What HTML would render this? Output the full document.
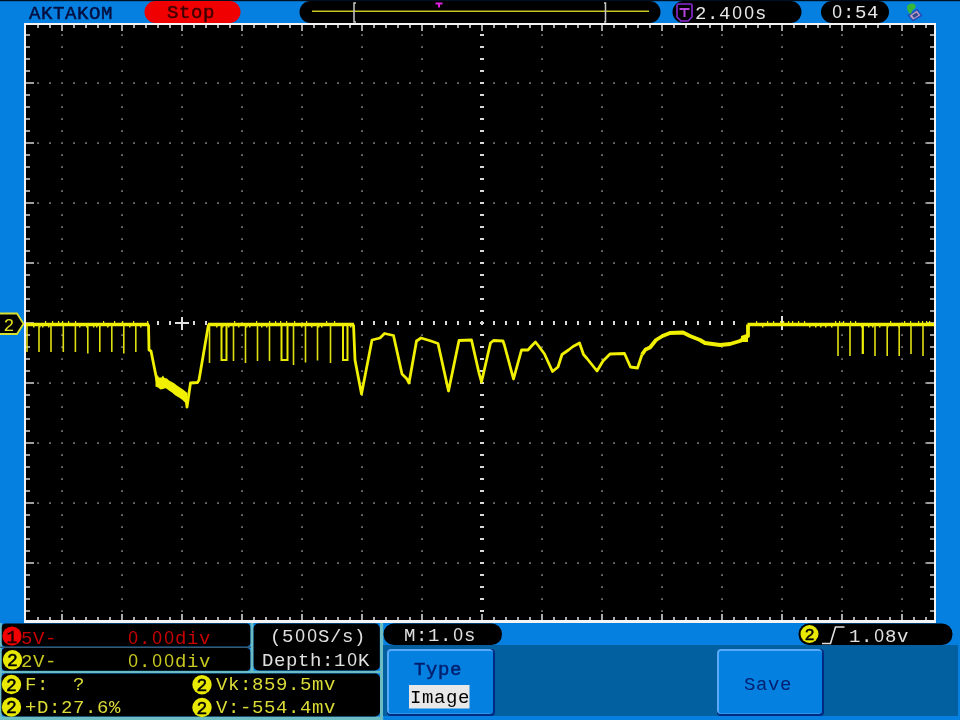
<!DOCTYPE html><html><head><meta charset="utf-8"><style>html,body{margin:0;padding:0;width:960px;height:720px;overflow:hidden;background:#0680e0}svg{display:block;will-change:transform}text{font-family:"Liberation Mono", monospace}.er{}.bd{stroke-width:0.5px}</style></head><body>
<svg width="960" height="720">
<rect x="0" y="0" width="960" height="720" fill="#0680e0"/>
<rect x="0" y="0" width="960" height="1.2" fill="#001020"/>
<rect x="24" y="23" width="912" height="600" fill="#f4f4f4"/>
<rect x="26" y="25" width="908" height="595" fill="#000"/>
<path fill="#d4d4d4" d="M37.2 25h1.6v3h-1.6zM37.2 620h1.6v-3h-1.6zM49.2 25h1.6v3h-1.6zM49.2 620h1.6v-3h-1.6zM61.2 25h1.6v6h-1.6zM61.2 620h1.6v-6h-1.6zM73.2 25h1.6v3h-1.6zM73.2 620h1.6v-3h-1.6zM85.2 25h1.6v3h-1.6zM85.2 620h1.6v-3h-1.6zM97.2 25h1.6v3h-1.6zM97.2 620h1.6v-3h-1.6zM109.2 25h1.6v3h-1.6zM109.2 620h1.6v-3h-1.6zM121.2 25h1.6v6h-1.6zM121.2 620h1.6v-6h-1.6zM133.2 25h1.6v3h-1.6zM133.2 620h1.6v-3h-1.6zM145.2 25h1.6v3h-1.6zM145.2 620h1.6v-3h-1.6zM157.2 25h1.6v3h-1.6zM157.2 620h1.6v-3h-1.6zM169.2 25h1.6v3h-1.6zM169.2 620h1.6v-3h-1.6zM181.2 25h1.6v6h-1.6zM181.2 620h1.6v-6h-1.6zM193.2 25h1.6v3h-1.6zM193.2 620h1.6v-3h-1.6zM205.2 25h1.6v3h-1.6zM205.2 620h1.6v-3h-1.6zM217.2 25h1.6v3h-1.6zM217.2 620h1.6v-3h-1.6zM229.2 25h1.6v3h-1.6zM229.2 620h1.6v-3h-1.6zM241.2 25h1.6v6h-1.6zM241.2 620h1.6v-6h-1.6zM253.2 25h1.6v3h-1.6zM253.2 620h1.6v-3h-1.6zM265.2 25h1.6v3h-1.6zM265.2 620h1.6v-3h-1.6zM277.2 25h1.6v3h-1.6zM277.2 620h1.6v-3h-1.6zM289.2 25h1.6v3h-1.6zM289.2 620h1.6v-3h-1.6zM301.2 25h1.6v6h-1.6zM301.2 620h1.6v-6h-1.6zM313.2 25h1.6v3h-1.6zM313.2 620h1.6v-3h-1.6zM325.2 25h1.6v3h-1.6zM325.2 620h1.6v-3h-1.6zM337.2 25h1.6v3h-1.6zM337.2 620h1.6v-3h-1.6zM349.2 25h1.6v3h-1.6zM349.2 620h1.6v-3h-1.6zM361.2 25h1.6v6h-1.6zM361.2 620h1.6v-6h-1.6zM373.2 25h1.6v3h-1.6zM373.2 620h1.6v-3h-1.6zM385.2 25h1.6v3h-1.6zM385.2 620h1.6v-3h-1.6zM397.2 25h1.6v3h-1.6zM397.2 620h1.6v-3h-1.6zM409.2 25h1.6v3h-1.6zM409.2 620h1.6v-3h-1.6zM421.2 25h1.6v6h-1.6zM421.2 620h1.6v-6h-1.6zM433.2 25h1.6v3h-1.6zM433.2 620h1.6v-3h-1.6zM445.2 25h1.6v3h-1.6zM445.2 620h1.6v-3h-1.6zM457.2 25h1.6v3h-1.6zM457.2 620h1.6v-3h-1.6zM469.2 25h1.6v3h-1.6zM469.2 620h1.6v-3h-1.6zM481.2 25h1.6v6h-1.6zM481.2 620h1.6v-6h-1.6zM493.2 25h1.6v3h-1.6zM493.2 620h1.6v-3h-1.6zM505.2 25h1.6v3h-1.6zM505.2 620h1.6v-3h-1.6zM517.2 25h1.6v3h-1.6zM517.2 620h1.6v-3h-1.6zM529.2 25h1.6v3h-1.6zM529.2 620h1.6v-3h-1.6zM541.2 25h1.6v6h-1.6zM541.2 620h1.6v-6h-1.6zM553.2 25h1.6v3h-1.6zM553.2 620h1.6v-3h-1.6zM565.2 25h1.6v3h-1.6zM565.2 620h1.6v-3h-1.6zM577.2 25h1.6v3h-1.6zM577.2 620h1.6v-3h-1.6zM589.2 25h1.6v3h-1.6zM589.2 620h1.6v-3h-1.6zM601.2 25h1.6v6h-1.6zM601.2 620h1.6v-6h-1.6zM613.2 25h1.6v3h-1.6zM613.2 620h1.6v-3h-1.6zM625.2 25h1.6v3h-1.6zM625.2 620h1.6v-3h-1.6zM637.2 25h1.6v3h-1.6zM637.2 620h1.6v-3h-1.6zM649.2 25h1.6v3h-1.6zM649.2 620h1.6v-3h-1.6zM661.2 25h1.6v6h-1.6zM661.2 620h1.6v-6h-1.6zM673.2 25h1.6v3h-1.6zM673.2 620h1.6v-3h-1.6zM685.2 25h1.6v3h-1.6zM685.2 620h1.6v-3h-1.6zM697.2 25h1.6v3h-1.6zM697.2 620h1.6v-3h-1.6zM709.2 25h1.6v3h-1.6zM709.2 620h1.6v-3h-1.6zM721.2 25h1.6v6h-1.6zM721.2 620h1.6v-6h-1.6zM733.2 25h1.6v3h-1.6zM733.2 620h1.6v-3h-1.6zM745.2 25h1.6v3h-1.6zM745.2 620h1.6v-3h-1.6zM757.2 25h1.6v3h-1.6zM757.2 620h1.6v-3h-1.6zM769.2 25h1.6v3h-1.6zM769.2 620h1.6v-3h-1.6zM781.2 25h1.6v6h-1.6zM781.2 620h1.6v-6h-1.6zM793.2 25h1.6v3h-1.6zM793.2 620h1.6v-3h-1.6zM805.2 25h1.6v3h-1.6zM805.2 620h1.6v-3h-1.6zM817.2 25h1.6v3h-1.6zM817.2 620h1.6v-3h-1.6zM829.2 25h1.6v3h-1.6zM829.2 620h1.6v-3h-1.6zM841.2 25h1.6v6h-1.6zM841.2 620h1.6v-6h-1.6zM853.2 25h1.6v3h-1.6zM853.2 620h1.6v-3h-1.6zM865.2 25h1.6v3h-1.6zM865.2 620h1.6v-3h-1.6zM877.2 25h1.6v3h-1.6zM877.2 620h1.6v-3h-1.6zM889.2 25h1.6v3h-1.6zM889.2 620h1.6v-3h-1.6zM901.2 25h1.6v6h-1.6zM901.2 620h1.6v-6h-1.6zM913.2 25h1.6v3h-1.6zM913.2 620h1.6v-3h-1.6zM925.2 25h1.6v3h-1.6zM925.2 620h1.6v-3h-1.6zM26 34.2h4v1.6h-4zM934 34.2h-4v1.6h4zM26 46.2h4v1.6h-4zM934 46.2h-4v1.6h4zM26 58.2h4v1.6h-4zM934 58.2h-4v1.6h4zM26 70.2h4v1.6h-4zM934 70.2h-4v1.6h4zM26 82.2h8v1.6h-8zM934 82.2h-8v1.6h8zM26 94.2h4v1.6h-4zM934 94.2h-4v1.6h4zM26 106.2h4v1.6h-4zM934 106.2h-4v1.6h4zM26 118.2h4v1.6h-4zM934 118.2h-4v1.6h4zM26 130.2h4v1.6h-4zM934 130.2h-4v1.6h4zM26 142.2h8v1.6h-8zM934 142.2h-8v1.6h8zM26 154.2h4v1.6h-4zM934 154.2h-4v1.6h4zM26 166.2h4v1.6h-4zM934 166.2h-4v1.6h4zM26 178.2h4v1.6h-4zM934 178.2h-4v1.6h4zM26 190.2h4v1.6h-4zM934 190.2h-4v1.6h4zM26 202.2h8v1.6h-8zM934 202.2h-8v1.6h8zM26 214.2h4v1.6h-4zM934 214.2h-4v1.6h4zM26 226.2h4v1.6h-4zM934 226.2h-4v1.6h4zM26 238.2h4v1.6h-4zM934 238.2h-4v1.6h4zM26 250.2h4v1.6h-4zM934 250.2h-4v1.6h4zM26 262.2h8v1.6h-8zM934 262.2h-8v1.6h8zM26 274.2h4v1.6h-4zM934 274.2h-4v1.6h4zM26 286.2h4v1.6h-4zM934 286.2h-4v1.6h4zM26 298.2h4v1.6h-4zM934 298.2h-4v1.6h4zM26 310.2h4v1.6h-4zM934 310.2h-4v1.6h4zM26 322.2h8v1.6h-8zM934 322.2h-8v1.6h8zM26 334.2h4v1.6h-4zM934 334.2h-4v1.6h4zM26 346.2h4v1.6h-4zM934 346.2h-4v1.6h4zM26 358.2h4v1.6h-4zM934 358.2h-4v1.6h4zM26 370.2h4v1.6h-4zM934 370.2h-4v1.6h4zM26 382.2h8v1.6h-8zM934 382.2h-8v1.6h8zM26 394.2h4v1.6h-4zM934 394.2h-4v1.6h4zM26 406.2h4v1.6h-4zM934 406.2h-4v1.6h4zM26 418.2h4v1.6h-4zM934 418.2h-4v1.6h4zM26 430.2h4v1.6h-4zM934 430.2h-4v1.6h4zM26 442.2h8v1.6h-8zM934 442.2h-8v1.6h8zM26 454.2h4v1.6h-4zM934 454.2h-4v1.6h4zM26 466.2h4v1.6h-4zM934 466.2h-4v1.6h4zM26 478.2h4v1.6h-4zM934 478.2h-4v1.6h4zM26 490.2h4v1.6h-4zM934 490.2h-4v1.6h4zM26 502.2h8v1.6h-8zM934 502.2h-8v1.6h8zM26 514.2h4v1.6h-4zM934 514.2h-4v1.6h4zM26 526.2h4v1.6h-4zM934 526.2h-4v1.6h4zM26 538.2h4v1.6h-4zM934 538.2h-4v1.6h4zM26 550.2h4v1.6h-4zM934 550.2h-4v1.6h4zM26 562.2h8v1.6h-8zM934 562.2h-8v1.6h8zM26 574.2h4v1.6h-4zM934 574.2h-4v1.6h4zM26 586.2h4v1.6h-4zM934 586.2h-4v1.6h4zM26 598.2h4v1.6h-4zM934 598.2h-4v1.6h4zM26 610.2h4v1.6h-4zM934 610.2h-4v1.6h4z"/>
<path fill="#7c7c7c" d="M61.2 34.2h1.7v1.7h-1.7zM61.2 46.2h1.7v1.7h-1.7zM61.2 58.2h1.7v1.7h-1.7zM61.2 70.2h1.7v1.7h-1.7zM61.2 82.2h1.7v1.7h-1.7zM61.2 94.2h1.7v1.7h-1.7zM61.2 106.2h1.7v1.7h-1.7zM61.2 118.2h1.7v1.7h-1.7zM61.2 130.2h1.7v1.7h-1.7zM61.2 142.2h1.7v1.7h-1.7zM61.2 154.2h1.7v1.7h-1.7zM61.2 166.2h1.7v1.7h-1.7zM61.2 178.2h1.7v1.7h-1.7zM61.2 190.2h1.7v1.7h-1.7zM61.2 202.2h1.7v1.7h-1.7zM61.2 214.2h1.7v1.7h-1.7zM61.2 226.2h1.7v1.7h-1.7zM61.2 238.2h1.7v1.7h-1.7zM61.2 250.2h1.7v1.7h-1.7zM61.2 262.2h1.7v1.7h-1.7zM61.2 274.2h1.7v1.7h-1.7zM61.2 286.2h1.7v1.7h-1.7zM61.2 298.2h1.7v1.7h-1.7zM61.2 310.2h1.7v1.7h-1.7zM61.2 322.2h1.7v1.7h-1.7zM61.2 334.2h1.7v1.7h-1.7zM61.2 346.2h1.7v1.7h-1.7zM61.2 358.2h1.7v1.7h-1.7zM61.2 370.2h1.7v1.7h-1.7zM61.2 382.2h1.7v1.7h-1.7zM61.2 394.2h1.7v1.7h-1.7zM61.2 406.2h1.7v1.7h-1.7zM61.2 418.2h1.7v1.7h-1.7zM61.2 430.2h1.7v1.7h-1.7zM61.2 442.2h1.7v1.7h-1.7zM61.2 454.2h1.7v1.7h-1.7zM61.2 466.2h1.7v1.7h-1.7zM61.2 478.2h1.7v1.7h-1.7zM61.2 490.2h1.7v1.7h-1.7zM61.2 502.2h1.7v1.7h-1.7zM61.2 514.2h1.7v1.7h-1.7zM61.2 526.2h1.7v1.7h-1.7zM61.2 538.2h1.7v1.7h-1.7zM61.2 550.2h1.7v1.7h-1.7zM61.2 562.2h1.7v1.7h-1.7zM61.2 574.2h1.7v1.7h-1.7zM61.2 586.2h1.7v1.7h-1.7zM61.2 598.2h1.7v1.7h-1.7zM61.2 610.2h1.7v1.7h-1.7zM121.2 34.2h1.7v1.7h-1.7zM121.2 46.2h1.7v1.7h-1.7zM121.2 58.2h1.7v1.7h-1.7zM121.2 70.2h1.7v1.7h-1.7zM121.2 82.2h1.7v1.7h-1.7zM121.2 94.2h1.7v1.7h-1.7zM121.2 106.2h1.7v1.7h-1.7zM121.2 118.2h1.7v1.7h-1.7zM121.2 130.2h1.7v1.7h-1.7zM121.2 142.2h1.7v1.7h-1.7zM121.2 154.2h1.7v1.7h-1.7zM121.2 166.2h1.7v1.7h-1.7zM121.2 178.2h1.7v1.7h-1.7zM121.2 190.2h1.7v1.7h-1.7zM121.2 202.2h1.7v1.7h-1.7zM121.2 214.2h1.7v1.7h-1.7zM121.2 226.2h1.7v1.7h-1.7zM121.2 238.2h1.7v1.7h-1.7zM121.2 250.2h1.7v1.7h-1.7zM121.2 262.2h1.7v1.7h-1.7zM121.2 274.2h1.7v1.7h-1.7zM121.2 286.2h1.7v1.7h-1.7zM121.2 298.2h1.7v1.7h-1.7zM121.2 310.2h1.7v1.7h-1.7zM121.2 322.2h1.7v1.7h-1.7zM121.2 334.2h1.7v1.7h-1.7zM121.2 346.2h1.7v1.7h-1.7zM121.2 358.2h1.7v1.7h-1.7zM121.2 370.2h1.7v1.7h-1.7zM121.2 382.2h1.7v1.7h-1.7zM121.2 394.2h1.7v1.7h-1.7zM121.2 406.2h1.7v1.7h-1.7zM121.2 418.2h1.7v1.7h-1.7zM121.2 430.2h1.7v1.7h-1.7zM121.2 442.2h1.7v1.7h-1.7zM121.2 454.2h1.7v1.7h-1.7zM121.2 466.2h1.7v1.7h-1.7zM121.2 478.2h1.7v1.7h-1.7zM121.2 490.2h1.7v1.7h-1.7zM121.2 502.2h1.7v1.7h-1.7zM121.2 514.2h1.7v1.7h-1.7zM121.2 526.2h1.7v1.7h-1.7zM121.2 538.2h1.7v1.7h-1.7zM121.2 550.2h1.7v1.7h-1.7zM121.2 562.2h1.7v1.7h-1.7zM121.2 574.2h1.7v1.7h-1.7zM121.2 586.2h1.7v1.7h-1.7zM121.2 598.2h1.7v1.7h-1.7zM121.2 610.2h1.7v1.7h-1.7zM181.2 34.2h1.7v1.7h-1.7zM181.2 46.2h1.7v1.7h-1.7zM181.2 58.2h1.7v1.7h-1.7zM181.2 70.2h1.7v1.7h-1.7zM181.2 82.2h1.7v1.7h-1.7zM181.2 94.2h1.7v1.7h-1.7zM181.2 106.2h1.7v1.7h-1.7zM181.2 118.2h1.7v1.7h-1.7zM181.2 130.2h1.7v1.7h-1.7zM181.2 142.2h1.7v1.7h-1.7zM181.2 154.2h1.7v1.7h-1.7zM181.2 166.2h1.7v1.7h-1.7zM181.2 178.2h1.7v1.7h-1.7zM181.2 190.2h1.7v1.7h-1.7zM181.2 202.2h1.7v1.7h-1.7zM181.2 214.2h1.7v1.7h-1.7zM181.2 226.2h1.7v1.7h-1.7zM181.2 238.2h1.7v1.7h-1.7zM181.2 250.2h1.7v1.7h-1.7zM181.2 262.2h1.7v1.7h-1.7zM181.2 274.2h1.7v1.7h-1.7zM181.2 286.2h1.7v1.7h-1.7zM181.2 298.2h1.7v1.7h-1.7zM181.2 310.2h1.7v1.7h-1.7zM181.2 322.2h1.7v1.7h-1.7zM181.2 334.2h1.7v1.7h-1.7zM181.2 346.2h1.7v1.7h-1.7zM181.2 358.2h1.7v1.7h-1.7zM181.2 370.2h1.7v1.7h-1.7zM181.2 382.2h1.7v1.7h-1.7zM181.2 394.2h1.7v1.7h-1.7zM181.2 406.2h1.7v1.7h-1.7zM181.2 418.2h1.7v1.7h-1.7zM181.2 430.2h1.7v1.7h-1.7zM181.2 442.2h1.7v1.7h-1.7zM181.2 454.2h1.7v1.7h-1.7zM181.2 466.2h1.7v1.7h-1.7zM181.2 478.2h1.7v1.7h-1.7zM181.2 490.2h1.7v1.7h-1.7zM181.2 502.2h1.7v1.7h-1.7zM181.2 514.2h1.7v1.7h-1.7zM181.2 526.2h1.7v1.7h-1.7zM181.2 538.2h1.7v1.7h-1.7zM181.2 550.2h1.7v1.7h-1.7zM181.2 562.2h1.7v1.7h-1.7zM181.2 574.2h1.7v1.7h-1.7zM181.2 586.2h1.7v1.7h-1.7zM181.2 598.2h1.7v1.7h-1.7zM181.2 610.2h1.7v1.7h-1.7zM241.2 34.2h1.7v1.7h-1.7zM241.2 46.2h1.7v1.7h-1.7zM241.2 58.2h1.7v1.7h-1.7zM241.2 70.2h1.7v1.7h-1.7zM241.2 82.2h1.7v1.7h-1.7zM241.2 94.2h1.7v1.7h-1.7zM241.2 106.2h1.7v1.7h-1.7zM241.2 118.2h1.7v1.7h-1.7zM241.2 130.2h1.7v1.7h-1.7zM241.2 142.2h1.7v1.7h-1.7zM241.2 154.2h1.7v1.7h-1.7zM241.2 166.2h1.7v1.7h-1.7zM241.2 178.2h1.7v1.7h-1.7zM241.2 190.2h1.7v1.7h-1.7zM241.2 202.2h1.7v1.7h-1.7zM241.2 214.2h1.7v1.7h-1.7zM241.2 226.2h1.7v1.7h-1.7zM241.2 238.2h1.7v1.7h-1.7zM241.2 250.2h1.7v1.7h-1.7zM241.2 262.2h1.7v1.7h-1.7zM241.2 274.2h1.7v1.7h-1.7zM241.2 286.2h1.7v1.7h-1.7zM241.2 298.2h1.7v1.7h-1.7zM241.2 310.2h1.7v1.7h-1.7zM241.2 322.2h1.7v1.7h-1.7zM241.2 334.2h1.7v1.7h-1.7zM241.2 346.2h1.7v1.7h-1.7zM241.2 358.2h1.7v1.7h-1.7zM241.2 370.2h1.7v1.7h-1.7zM241.2 382.2h1.7v1.7h-1.7zM241.2 394.2h1.7v1.7h-1.7zM241.2 406.2h1.7v1.7h-1.7zM241.2 418.2h1.7v1.7h-1.7zM241.2 430.2h1.7v1.7h-1.7zM241.2 442.2h1.7v1.7h-1.7zM241.2 454.2h1.7v1.7h-1.7zM241.2 466.2h1.7v1.7h-1.7zM241.2 478.2h1.7v1.7h-1.7zM241.2 490.2h1.7v1.7h-1.7zM241.2 502.2h1.7v1.7h-1.7zM241.2 514.2h1.7v1.7h-1.7zM241.2 526.2h1.7v1.7h-1.7zM241.2 538.2h1.7v1.7h-1.7zM241.2 550.2h1.7v1.7h-1.7zM241.2 562.2h1.7v1.7h-1.7zM241.2 574.2h1.7v1.7h-1.7zM241.2 586.2h1.7v1.7h-1.7zM241.2 598.2h1.7v1.7h-1.7zM241.2 610.2h1.7v1.7h-1.7zM301.2 34.2h1.7v1.7h-1.7zM301.2 46.2h1.7v1.7h-1.7zM301.2 58.2h1.7v1.7h-1.7zM301.2 70.2h1.7v1.7h-1.7zM301.2 82.2h1.7v1.7h-1.7zM301.2 94.2h1.7v1.7h-1.7zM301.2 106.2h1.7v1.7h-1.7zM301.2 118.2h1.7v1.7h-1.7zM301.2 130.2h1.7v1.7h-1.7zM301.2 142.2h1.7v1.7h-1.7zM301.2 154.2h1.7v1.7h-1.7zM301.2 166.2h1.7v1.7h-1.7zM301.2 178.2h1.7v1.7h-1.7zM301.2 190.2h1.7v1.7h-1.7zM301.2 202.2h1.7v1.7h-1.7zM301.2 214.2h1.7v1.7h-1.7zM301.2 226.2h1.7v1.7h-1.7zM301.2 238.2h1.7v1.7h-1.7zM301.2 250.2h1.7v1.7h-1.7zM301.2 262.2h1.7v1.7h-1.7zM301.2 274.2h1.7v1.7h-1.7zM301.2 286.2h1.7v1.7h-1.7zM301.2 298.2h1.7v1.7h-1.7zM301.2 310.2h1.7v1.7h-1.7zM301.2 322.2h1.7v1.7h-1.7zM301.2 334.2h1.7v1.7h-1.7zM301.2 346.2h1.7v1.7h-1.7zM301.2 358.2h1.7v1.7h-1.7zM301.2 370.2h1.7v1.7h-1.7zM301.2 382.2h1.7v1.7h-1.7zM301.2 394.2h1.7v1.7h-1.7zM301.2 406.2h1.7v1.7h-1.7zM301.2 418.2h1.7v1.7h-1.7zM301.2 430.2h1.7v1.7h-1.7zM301.2 442.2h1.7v1.7h-1.7zM301.2 454.2h1.7v1.7h-1.7zM301.2 466.2h1.7v1.7h-1.7zM301.2 478.2h1.7v1.7h-1.7zM301.2 490.2h1.7v1.7h-1.7zM301.2 502.2h1.7v1.7h-1.7zM301.2 514.2h1.7v1.7h-1.7zM301.2 526.2h1.7v1.7h-1.7zM301.2 538.2h1.7v1.7h-1.7zM301.2 550.2h1.7v1.7h-1.7zM301.2 562.2h1.7v1.7h-1.7zM301.2 574.2h1.7v1.7h-1.7zM301.2 586.2h1.7v1.7h-1.7zM301.2 598.2h1.7v1.7h-1.7zM301.2 610.2h1.7v1.7h-1.7zM361.2 34.2h1.7v1.7h-1.7zM361.2 46.2h1.7v1.7h-1.7zM361.2 58.2h1.7v1.7h-1.7zM361.2 70.2h1.7v1.7h-1.7zM361.2 82.2h1.7v1.7h-1.7zM361.2 94.2h1.7v1.7h-1.7zM361.2 106.2h1.7v1.7h-1.7zM361.2 118.2h1.7v1.7h-1.7zM361.2 130.2h1.7v1.7h-1.7zM361.2 142.2h1.7v1.7h-1.7zM361.2 154.2h1.7v1.7h-1.7zM361.2 166.2h1.7v1.7h-1.7zM361.2 178.2h1.7v1.7h-1.7zM361.2 190.2h1.7v1.7h-1.7zM361.2 202.2h1.7v1.7h-1.7zM361.2 214.2h1.7v1.7h-1.7zM361.2 226.2h1.7v1.7h-1.7zM361.2 238.2h1.7v1.7h-1.7zM361.2 250.2h1.7v1.7h-1.7zM361.2 262.2h1.7v1.7h-1.7zM361.2 274.2h1.7v1.7h-1.7zM361.2 286.2h1.7v1.7h-1.7zM361.2 298.2h1.7v1.7h-1.7zM361.2 310.2h1.7v1.7h-1.7zM361.2 322.2h1.7v1.7h-1.7zM361.2 334.2h1.7v1.7h-1.7zM361.2 346.2h1.7v1.7h-1.7zM361.2 358.2h1.7v1.7h-1.7zM361.2 370.2h1.7v1.7h-1.7zM361.2 382.2h1.7v1.7h-1.7zM361.2 394.2h1.7v1.7h-1.7zM361.2 406.2h1.7v1.7h-1.7zM361.2 418.2h1.7v1.7h-1.7zM361.2 430.2h1.7v1.7h-1.7zM361.2 442.2h1.7v1.7h-1.7zM361.2 454.2h1.7v1.7h-1.7zM361.2 466.2h1.7v1.7h-1.7zM361.2 478.2h1.7v1.7h-1.7zM361.2 490.2h1.7v1.7h-1.7zM361.2 502.2h1.7v1.7h-1.7zM361.2 514.2h1.7v1.7h-1.7zM361.2 526.2h1.7v1.7h-1.7zM361.2 538.2h1.7v1.7h-1.7zM361.2 550.2h1.7v1.7h-1.7zM361.2 562.2h1.7v1.7h-1.7zM361.2 574.2h1.7v1.7h-1.7zM361.2 586.2h1.7v1.7h-1.7zM361.2 598.2h1.7v1.7h-1.7zM361.2 610.2h1.7v1.7h-1.7zM421.2 34.2h1.7v1.7h-1.7zM421.2 46.2h1.7v1.7h-1.7zM421.2 58.2h1.7v1.7h-1.7zM421.2 70.2h1.7v1.7h-1.7zM421.2 82.2h1.7v1.7h-1.7zM421.2 94.2h1.7v1.7h-1.7zM421.2 106.2h1.7v1.7h-1.7zM421.2 118.2h1.7v1.7h-1.7zM421.2 130.2h1.7v1.7h-1.7zM421.2 142.2h1.7v1.7h-1.7zM421.2 154.2h1.7v1.7h-1.7zM421.2 166.2h1.7v1.7h-1.7zM421.2 178.2h1.7v1.7h-1.7zM421.2 190.2h1.7v1.7h-1.7zM421.2 202.2h1.7v1.7h-1.7zM421.2 214.2h1.7v1.7h-1.7zM421.2 226.2h1.7v1.7h-1.7zM421.2 238.2h1.7v1.7h-1.7zM421.2 250.2h1.7v1.7h-1.7zM421.2 262.2h1.7v1.7h-1.7zM421.2 274.2h1.7v1.7h-1.7zM421.2 286.2h1.7v1.7h-1.7zM421.2 298.2h1.7v1.7h-1.7zM421.2 310.2h1.7v1.7h-1.7zM421.2 322.2h1.7v1.7h-1.7zM421.2 334.2h1.7v1.7h-1.7zM421.2 346.2h1.7v1.7h-1.7zM421.2 358.2h1.7v1.7h-1.7zM421.2 370.2h1.7v1.7h-1.7zM421.2 382.2h1.7v1.7h-1.7zM421.2 394.2h1.7v1.7h-1.7zM421.2 406.2h1.7v1.7h-1.7zM421.2 418.2h1.7v1.7h-1.7zM421.2 430.2h1.7v1.7h-1.7zM421.2 442.2h1.7v1.7h-1.7zM421.2 454.2h1.7v1.7h-1.7zM421.2 466.2h1.7v1.7h-1.7zM421.2 478.2h1.7v1.7h-1.7zM421.2 490.2h1.7v1.7h-1.7zM421.2 502.2h1.7v1.7h-1.7zM421.2 514.2h1.7v1.7h-1.7zM421.2 526.2h1.7v1.7h-1.7zM421.2 538.2h1.7v1.7h-1.7zM421.2 550.2h1.7v1.7h-1.7zM421.2 562.2h1.7v1.7h-1.7zM421.2 574.2h1.7v1.7h-1.7zM421.2 586.2h1.7v1.7h-1.7zM421.2 598.2h1.7v1.7h-1.7zM421.2 610.2h1.7v1.7h-1.7zM541.2 34.2h1.7v1.7h-1.7zM541.2 46.2h1.7v1.7h-1.7zM541.2 58.2h1.7v1.7h-1.7zM541.2 70.2h1.7v1.7h-1.7zM541.2 82.2h1.7v1.7h-1.7zM541.2 94.2h1.7v1.7h-1.7zM541.2 106.2h1.7v1.7h-1.7zM541.2 118.2h1.7v1.7h-1.7zM541.2 130.2h1.7v1.7h-1.7zM541.2 142.2h1.7v1.7h-1.7zM541.2 154.2h1.7v1.7h-1.7zM541.2 166.2h1.7v1.7h-1.7zM541.2 178.2h1.7v1.7h-1.7zM541.2 190.2h1.7v1.7h-1.7zM541.2 202.2h1.7v1.7h-1.7zM541.2 214.2h1.7v1.7h-1.7zM541.2 226.2h1.7v1.7h-1.7zM541.2 238.2h1.7v1.7h-1.7zM541.2 250.2h1.7v1.7h-1.7zM541.2 262.2h1.7v1.7h-1.7zM541.2 274.2h1.7v1.7h-1.7zM541.2 286.2h1.7v1.7h-1.7zM541.2 298.2h1.7v1.7h-1.7zM541.2 310.2h1.7v1.7h-1.7zM541.2 322.2h1.7v1.7h-1.7zM541.2 334.2h1.7v1.7h-1.7zM541.2 346.2h1.7v1.7h-1.7zM541.2 358.2h1.7v1.7h-1.7zM541.2 370.2h1.7v1.7h-1.7zM541.2 382.2h1.7v1.7h-1.7zM541.2 394.2h1.7v1.7h-1.7zM541.2 406.2h1.7v1.7h-1.7zM541.2 418.2h1.7v1.7h-1.7zM541.2 430.2h1.7v1.7h-1.7zM541.2 442.2h1.7v1.7h-1.7zM541.2 454.2h1.7v1.7h-1.7zM541.2 466.2h1.7v1.7h-1.7zM541.2 478.2h1.7v1.7h-1.7zM541.2 490.2h1.7v1.7h-1.7zM541.2 502.2h1.7v1.7h-1.7zM541.2 514.2h1.7v1.7h-1.7zM541.2 526.2h1.7v1.7h-1.7zM541.2 538.2h1.7v1.7h-1.7zM541.2 550.2h1.7v1.7h-1.7zM541.2 562.2h1.7v1.7h-1.7zM541.2 574.2h1.7v1.7h-1.7zM541.2 586.2h1.7v1.7h-1.7zM541.2 598.2h1.7v1.7h-1.7zM541.2 610.2h1.7v1.7h-1.7zM601.2 34.2h1.7v1.7h-1.7zM601.2 46.2h1.7v1.7h-1.7zM601.2 58.2h1.7v1.7h-1.7zM601.2 70.2h1.7v1.7h-1.7zM601.2 82.2h1.7v1.7h-1.7zM601.2 94.2h1.7v1.7h-1.7zM601.2 106.2h1.7v1.7h-1.7zM601.2 118.2h1.7v1.7h-1.7zM601.2 130.2h1.7v1.7h-1.7zM601.2 142.2h1.7v1.7h-1.7zM601.2 154.2h1.7v1.7h-1.7zM601.2 166.2h1.7v1.7h-1.7zM601.2 178.2h1.7v1.7h-1.7zM601.2 190.2h1.7v1.7h-1.7zM601.2 202.2h1.7v1.7h-1.7zM601.2 214.2h1.7v1.7h-1.7zM601.2 226.2h1.7v1.7h-1.7zM601.2 238.2h1.7v1.7h-1.7zM601.2 250.2h1.7v1.7h-1.7zM601.2 262.2h1.7v1.7h-1.7zM601.2 274.2h1.7v1.7h-1.7zM601.2 286.2h1.7v1.7h-1.7zM601.2 298.2h1.7v1.7h-1.7zM601.2 310.2h1.7v1.7h-1.7zM601.2 322.2h1.7v1.7h-1.7zM601.2 334.2h1.7v1.7h-1.7zM601.2 346.2h1.7v1.7h-1.7zM601.2 358.2h1.7v1.7h-1.7zM601.2 370.2h1.7v1.7h-1.7zM601.2 382.2h1.7v1.7h-1.7zM601.2 394.2h1.7v1.7h-1.7zM601.2 406.2h1.7v1.7h-1.7zM601.2 418.2h1.7v1.7h-1.7zM601.2 430.2h1.7v1.7h-1.7zM601.2 442.2h1.7v1.7h-1.7zM601.2 454.2h1.7v1.7h-1.7zM601.2 466.2h1.7v1.7h-1.7zM601.2 478.2h1.7v1.7h-1.7zM601.2 490.2h1.7v1.7h-1.7zM601.2 502.2h1.7v1.7h-1.7zM601.2 514.2h1.7v1.7h-1.7zM601.2 526.2h1.7v1.7h-1.7zM601.2 538.2h1.7v1.7h-1.7zM601.2 550.2h1.7v1.7h-1.7zM601.2 562.2h1.7v1.7h-1.7zM601.2 574.2h1.7v1.7h-1.7zM601.2 586.2h1.7v1.7h-1.7zM601.2 598.2h1.7v1.7h-1.7zM601.2 610.2h1.7v1.7h-1.7zM661.2 34.2h1.7v1.7h-1.7zM661.2 46.2h1.7v1.7h-1.7zM661.2 58.2h1.7v1.7h-1.7zM661.2 70.2h1.7v1.7h-1.7zM661.2 82.2h1.7v1.7h-1.7zM661.2 94.2h1.7v1.7h-1.7zM661.2 106.2h1.7v1.7h-1.7zM661.2 118.2h1.7v1.7h-1.7zM661.2 130.2h1.7v1.7h-1.7zM661.2 142.2h1.7v1.7h-1.7zM661.2 154.2h1.7v1.7h-1.7zM661.2 166.2h1.7v1.7h-1.7zM661.2 178.2h1.7v1.7h-1.7zM661.2 190.2h1.7v1.7h-1.7zM661.2 202.2h1.7v1.7h-1.7zM661.2 214.2h1.7v1.7h-1.7zM661.2 226.2h1.7v1.7h-1.7zM661.2 238.2h1.7v1.7h-1.7zM661.2 250.2h1.7v1.7h-1.7zM661.2 262.2h1.7v1.7h-1.7zM661.2 274.2h1.7v1.7h-1.7zM661.2 286.2h1.7v1.7h-1.7zM661.2 298.2h1.7v1.7h-1.7zM661.2 310.2h1.7v1.7h-1.7zM661.2 322.2h1.7v1.7h-1.7zM661.2 334.2h1.7v1.7h-1.7zM661.2 346.2h1.7v1.7h-1.7zM661.2 358.2h1.7v1.7h-1.7zM661.2 370.2h1.7v1.7h-1.7zM661.2 382.2h1.7v1.7h-1.7zM661.2 394.2h1.7v1.7h-1.7zM661.2 406.2h1.7v1.7h-1.7zM661.2 418.2h1.7v1.7h-1.7zM661.2 430.2h1.7v1.7h-1.7zM661.2 442.2h1.7v1.7h-1.7zM661.2 454.2h1.7v1.7h-1.7zM661.2 466.2h1.7v1.7h-1.7zM661.2 478.2h1.7v1.7h-1.7zM661.2 490.2h1.7v1.7h-1.7zM661.2 502.2h1.7v1.7h-1.7zM661.2 514.2h1.7v1.7h-1.7zM661.2 526.2h1.7v1.7h-1.7zM661.2 538.2h1.7v1.7h-1.7zM661.2 550.2h1.7v1.7h-1.7zM661.2 562.2h1.7v1.7h-1.7zM661.2 574.2h1.7v1.7h-1.7zM661.2 586.2h1.7v1.7h-1.7zM661.2 598.2h1.7v1.7h-1.7zM661.2 610.2h1.7v1.7h-1.7zM721.2 34.2h1.7v1.7h-1.7zM721.2 46.2h1.7v1.7h-1.7zM721.2 58.2h1.7v1.7h-1.7zM721.2 70.2h1.7v1.7h-1.7zM721.2 82.2h1.7v1.7h-1.7zM721.2 94.2h1.7v1.7h-1.7zM721.2 106.2h1.7v1.7h-1.7zM721.2 118.2h1.7v1.7h-1.7zM721.2 130.2h1.7v1.7h-1.7zM721.2 142.2h1.7v1.7h-1.7zM721.2 154.2h1.7v1.7h-1.7zM721.2 166.2h1.7v1.7h-1.7zM721.2 178.2h1.7v1.7h-1.7zM721.2 190.2h1.7v1.7h-1.7zM721.2 202.2h1.7v1.7h-1.7zM721.2 214.2h1.7v1.7h-1.7zM721.2 226.2h1.7v1.7h-1.7zM721.2 238.2h1.7v1.7h-1.7zM721.2 250.2h1.7v1.7h-1.7zM721.2 262.2h1.7v1.7h-1.7zM721.2 274.2h1.7v1.7h-1.7zM721.2 286.2h1.7v1.7h-1.7zM721.2 298.2h1.7v1.7h-1.7zM721.2 310.2h1.7v1.7h-1.7zM721.2 322.2h1.7v1.7h-1.7zM721.2 334.2h1.7v1.7h-1.7zM721.2 346.2h1.7v1.7h-1.7zM721.2 358.2h1.7v1.7h-1.7zM721.2 370.2h1.7v1.7h-1.7zM721.2 382.2h1.7v1.7h-1.7zM721.2 394.2h1.7v1.7h-1.7zM721.2 406.2h1.7v1.7h-1.7zM721.2 418.2h1.7v1.7h-1.7zM721.2 430.2h1.7v1.7h-1.7zM721.2 442.2h1.7v1.7h-1.7zM721.2 454.2h1.7v1.7h-1.7zM721.2 466.2h1.7v1.7h-1.7zM721.2 478.2h1.7v1.7h-1.7zM721.2 490.2h1.7v1.7h-1.7zM721.2 502.2h1.7v1.7h-1.7zM721.2 514.2h1.7v1.7h-1.7zM721.2 526.2h1.7v1.7h-1.7zM721.2 538.2h1.7v1.7h-1.7zM721.2 550.2h1.7v1.7h-1.7zM721.2 562.2h1.7v1.7h-1.7zM721.2 574.2h1.7v1.7h-1.7zM721.2 586.2h1.7v1.7h-1.7zM721.2 598.2h1.7v1.7h-1.7zM721.2 610.2h1.7v1.7h-1.7zM781.2 34.2h1.7v1.7h-1.7zM781.2 46.2h1.7v1.7h-1.7zM781.2 58.2h1.7v1.7h-1.7zM781.2 70.2h1.7v1.7h-1.7zM781.2 82.2h1.7v1.7h-1.7zM781.2 94.2h1.7v1.7h-1.7zM781.2 106.2h1.7v1.7h-1.7zM781.2 118.2h1.7v1.7h-1.7zM781.2 130.2h1.7v1.7h-1.7zM781.2 142.2h1.7v1.7h-1.7zM781.2 154.2h1.7v1.7h-1.7zM781.2 166.2h1.7v1.7h-1.7zM781.2 178.2h1.7v1.7h-1.7zM781.2 190.2h1.7v1.7h-1.7zM781.2 202.2h1.7v1.7h-1.7zM781.2 214.2h1.7v1.7h-1.7zM781.2 226.2h1.7v1.7h-1.7zM781.2 238.2h1.7v1.7h-1.7zM781.2 250.2h1.7v1.7h-1.7zM781.2 262.2h1.7v1.7h-1.7zM781.2 274.2h1.7v1.7h-1.7zM781.2 286.2h1.7v1.7h-1.7zM781.2 298.2h1.7v1.7h-1.7zM781.2 310.2h1.7v1.7h-1.7zM781.2 322.2h1.7v1.7h-1.7zM781.2 334.2h1.7v1.7h-1.7zM781.2 346.2h1.7v1.7h-1.7zM781.2 358.2h1.7v1.7h-1.7zM781.2 370.2h1.7v1.7h-1.7zM781.2 382.2h1.7v1.7h-1.7zM781.2 394.2h1.7v1.7h-1.7zM781.2 406.2h1.7v1.7h-1.7zM781.2 418.2h1.7v1.7h-1.7zM781.2 430.2h1.7v1.7h-1.7zM781.2 442.2h1.7v1.7h-1.7zM781.2 454.2h1.7v1.7h-1.7zM781.2 466.2h1.7v1.7h-1.7zM781.2 478.2h1.7v1.7h-1.7zM781.2 490.2h1.7v1.7h-1.7zM781.2 502.2h1.7v1.7h-1.7zM781.2 514.2h1.7v1.7h-1.7zM781.2 526.2h1.7v1.7h-1.7zM781.2 538.2h1.7v1.7h-1.7zM781.2 550.2h1.7v1.7h-1.7zM781.2 562.2h1.7v1.7h-1.7zM781.2 574.2h1.7v1.7h-1.7zM781.2 586.2h1.7v1.7h-1.7zM781.2 598.2h1.7v1.7h-1.7zM781.2 610.2h1.7v1.7h-1.7zM841.2 34.2h1.7v1.7h-1.7zM841.2 46.2h1.7v1.7h-1.7zM841.2 58.2h1.7v1.7h-1.7zM841.2 70.2h1.7v1.7h-1.7zM841.2 82.2h1.7v1.7h-1.7zM841.2 94.2h1.7v1.7h-1.7zM841.2 106.2h1.7v1.7h-1.7zM841.2 118.2h1.7v1.7h-1.7zM841.2 130.2h1.7v1.7h-1.7zM841.2 142.2h1.7v1.7h-1.7zM841.2 154.2h1.7v1.7h-1.7zM841.2 166.2h1.7v1.7h-1.7zM841.2 178.2h1.7v1.7h-1.7zM841.2 190.2h1.7v1.7h-1.7zM841.2 202.2h1.7v1.7h-1.7zM841.2 214.2h1.7v1.7h-1.7zM841.2 226.2h1.7v1.7h-1.7zM841.2 238.2h1.7v1.7h-1.7zM841.2 250.2h1.7v1.7h-1.7zM841.2 262.2h1.7v1.7h-1.7zM841.2 274.2h1.7v1.7h-1.7zM841.2 286.2h1.7v1.7h-1.7zM841.2 298.2h1.7v1.7h-1.7zM841.2 310.2h1.7v1.7h-1.7zM841.2 322.2h1.7v1.7h-1.7zM841.2 334.2h1.7v1.7h-1.7zM841.2 346.2h1.7v1.7h-1.7zM841.2 358.2h1.7v1.7h-1.7zM841.2 370.2h1.7v1.7h-1.7zM841.2 382.2h1.7v1.7h-1.7zM841.2 394.2h1.7v1.7h-1.7zM841.2 406.2h1.7v1.7h-1.7zM841.2 418.2h1.7v1.7h-1.7zM841.2 430.2h1.7v1.7h-1.7zM841.2 442.2h1.7v1.7h-1.7zM841.2 454.2h1.7v1.7h-1.7zM841.2 466.2h1.7v1.7h-1.7zM841.2 478.2h1.7v1.7h-1.7zM841.2 490.2h1.7v1.7h-1.7zM841.2 502.2h1.7v1.7h-1.7zM841.2 514.2h1.7v1.7h-1.7zM841.2 526.2h1.7v1.7h-1.7zM841.2 538.2h1.7v1.7h-1.7zM841.2 550.2h1.7v1.7h-1.7zM841.2 562.2h1.7v1.7h-1.7zM841.2 574.2h1.7v1.7h-1.7zM841.2 586.2h1.7v1.7h-1.7zM841.2 598.2h1.7v1.7h-1.7zM841.2 610.2h1.7v1.7h-1.7zM901.2 34.2h1.7v1.7h-1.7zM901.2 46.2h1.7v1.7h-1.7zM901.2 58.2h1.7v1.7h-1.7zM901.2 70.2h1.7v1.7h-1.7zM901.2 82.2h1.7v1.7h-1.7zM901.2 94.2h1.7v1.7h-1.7zM901.2 106.2h1.7v1.7h-1.7zM901.2 118.2h1.7v1.7h-1.7zM901.2 130.2h1.7v1.7h-1.7zM901.2 142.2h1.7v1.7h-1.7zM901.2 154.2h1.7v1.7h-1.7zM901.2 166.2h1.7v1.7h-1.7zM901.2 178.2h1.7v1.7h-1.7zM901.2 190.2h1.7v1.7h-1.7zM901.2 202.2h1.7v1.7h-1.7zM901.2 214.2h1.7v1.7h-1.7zM901.2 226.2h1.7v1.7h-1.7zM901.2 238.2h1.7v1.7h-1.7zM901.2 250.2h1.7v1.7h-1.7zM901.2 262.2h1.7v1.7h-1.7zM901.2 274.2h1.7v1.7h-1.7zM901.2 286.2h1.7v1.7h-1.7zM901.2 298.2h1.7v1.7h-1.7zM901.2 310.2h1.7v1.7h-1.7zM901.2 322.2h1.7v1.7h-1.7zM901.2 334.2h1.7v1.7h-1.7zM901.2 346.2h1.7v1.7h-1.7zM901.2 358.2h1.7v1.7h-1.7zM901.2 370.2h1.7v1.7h-1.7zM901.2 382.2h1.7v1.7h-1.7zM901.2 394.2h1.7v1.7h-1.7zM901.2 406.2h1.7v1.7h-1.7zM901.2 418.2h1.7v1.7h-1.7zM901.2 430.2h1.7v1.7h-1.7zM901.2 442.2h1.7v1.7h-1.7zM901.2 454.2h1.7v1.7h-1.7zM901.2 466.2h1.7v1.7h-1.7zM901.2 478.2h1.7v1.7h-1.7zM901.2 490.2h1.7v1.7h-1.7zM901.2 502.2h1.7v1.7h-1.7zM901.2 514.2h1.7v1.7h-1.7zM901.2 526.2h1.7v1.7h-1.7zM901.2 538.2h1.7v1.7h-1.7zM901.2 550.2h1.7v1.7h-1.7zM901.2 562.2h1.7v1.7h-1.7zM901.2 574.2h1.7v1.7h-1.7zM901.2 586.2h1.7v1.7h-1.7zM901.2 598.2h1.7v1.7h-1.7zM901.2 610.2h1.7v1.7h-1.7zM37.2 82.2h1.7v1.7h-1.7zM49.2 82.2h1.7v1.7h-1.7zM73.2 82.2h1.7v1.7h-1.7zM85.2 82.2h1.7v1.7h-1.7zM97.2 82.2h1.7v1.7h-1.7zM109.2 82.2h1.7v1.7h-1.7zM133.2 82.2h1.7v1.7h-1.7zM145.2 82.2h1.7v1.7h-1.7zM157.2 82.2h1.7v1.7h-1.7zM169.2 82.2h1.7v1.7h-1.7zM193.2 82.2h1.7v1.7h-1.7zM205.2 82.2h1.7v1.7h-1.7zM217.2 82.2h1.7v1.7h-1.7zM229.2 82.2h1.7v1.7h-1.7zM253.2 82.2h1.7v1.7h-1.7zM265.2 82.2h1.7v1.7h-1.7zM277.2 82.2h1.7v1.7h-1.7zM289.2 82.2h1.7v1.7h-1.7zM313.2 82.2h1.7v1.7h-1.7zM325.2 82.2h1.7v1.7h-1.7zM337.2 82.2h1.7v1.7h-1.7zM349.2 82.2h1.7v1.7h-1.7zM373.2 82.2h1.7v1.7h-1.7zM385.2 82.2h1.7v1.7h-1.7zM397.2 82.2h1.7v1.7h-1.7zM409.2 82.2h1.7v1.7h-1.7zM433.2 82.2h1.7v1.7h-1.7zM445.2 82.2h1.7v1.7h-1.7zM457.2 82.2h1.7v1.7h-1.7zM469.2 82.2h1.7v1.7h-1.7zM493.2 82.2h1.7v1.7h-1.7zM505.2 82.2h1.7v1.7h-1.7zM517.2 82.2h1.7v1.7h-1.7zM529.2 82.2h1.7v1.7h-1.7zM553.2 82.2h1.7v1.7h-1.7zM565.2 82.2h1.7v1.7h-1.7zM577.2 82.2h1.7v1.7h-1.7zM589.2 82.2h1.7v1.7h-1.7zM613.2 82.2h1.7v1.7h-1.7zM625.2 82.2h1.7v1.7h-1.7zM637.2 82.2h1.7v1.7h-1.7zM649.2 82.2h1.7v1.7h-1.7zM673.2 82.2h1.7v1.7h-1.7zM685.2 82.2h1.7v1.7h-1.7zM697.2 82.2h1.7v1.7h-1.7zM709.2 82.2h1.7v1.7h-1.7zM733.2 82.2h1.7v1.7h-1.7zM745.2 82.2h1.7v1.7h-1.7zM757.2 82.2h1.7v1.7h-1.7zM769.2 82.2h1.7v1.7h-1.7zM793.2 82.2h1.7v1.7h-1.7zM805.2 82.2h1.7v1.7h-1.7zM817.2 82.2h1.7v1.7h-1.7zM829.2 82.2h1.7v1.7h-1.7zM853.2 82.2h1.7v1.7h-1.7zM865.2 82.2h1.7v1.7h-1.7zM877.2 82.2h1.7v1.7h-1.7zM889.2 82.2h1.7v1.7h-1.7zM913.2 82.2h1.7v1.7h-1.7zM925.2 82.2h1.7v1.7h-1.7zM37.2 142.2h1.7v1.7h-1.7zM49.2 142.2h1.7v1.7h-1.7zM73.2 142.2h1.7v1.7h-1.7zM85.2 142.2h1.7v1.7h-1.7zM97.2 142.2h1.7v1.7h-1.7zM109.2 142.2h1.7v1.7h-1.7zM133.2 142.2h1.7v1.7h-1.7zM145.2 142.2h1.7v1.7h-1.7zM157.2 142.2h1.7v1.7h-1.7zM169.2 142.2h1.7v1.7h-1.7zM193.2 142.2h1.7v1.7h-1.7zM205.2 142.2h1.7v1.7h-1.7zM217.2 142.2h1.7v1.7h-1.7zM229.2 142.2h1.7v1.7h-1.7zM253.2 142.2h1.7v1.7h-1.7zM265.2 142.2h1.7v1.7h-1.7zM277.2 142.2h1.7v1.7h-1.7zM289.2 142.2h1.7v1.7h-1.7zM313.2 142.2h1.7v1.7h-1.7zM325.2 142.2h1.7v1.7h-1.7zM337.2 142.2h1.7v1.7h-1.7zM349.2 142.2h1.7v1.7h-1.7zM373.2 142.2h1.7v1.7h-1.7zM385.2 142.2h1.7v1.7h-1.7zM397.2 142.2h1.7v1.7h-1.7zM409.2 142.2h1.7v1.7h-1.7zM433.2 142.2h1.7v1.7h-1.7zM445.2 142.2h1.7v1.7h-1.7zM457.2 142.2h1.7v1.7h-1.7zM469.2 142.2h1.7v1.7h-1.7zM493.2 142.2h1.7v1.7h-1.7zM505.2 142.2h1.7v1.7h-1.7zM517.2 142.2h1.7v1.7h-1.7zM529.2 142.2h1.7v1.7h-1.7zM553.2 142.2h1.7v1.7h-1.7zM565.2 142.2h1.7v1.7h-1.7zM577.2 142.2h1.7v1.7h-1.7zM589.2 142.2h1.7v1.7h-1.7zM613.2 142.2h1.7v1.7h-1.7zM625.2 142.2h1.7v1.7h-1.7zM637.2 142.2h1.7v1.7h-1.7zM649.2 142.2h1.7v1.7h-1.7zM673.2 142.2h1.7v1.7h-1.7zM685.2 142.2h1.7v1.7h-1.7zM697.2 142.2h1.7v1.7h-1.7zM709.2 142.2h1.7v1.7h-1.7zM733.2 142.2h1.7v1.7h-1.7zM745.2 142.2h1.7v1.7h-1.7zM757.2 142.2h1.7v1.7h-1.7zM769.2 142.2h1.7v1.7h-1.7zM793.2 142.2h1.7v1.7h-1.7zM805.2 142.2h1.7v1.7h-1.7zM817.2 142.2h1.7v1.7h-1.7zM829.2 142.2h1.7v1.7h-1.7zM853.2 142.2h1.7v1.7h-1.7zM865.2 142.2h1.7v1.7h-1.7zM877.2 142.2h1.7v1.7h-1.7zM889.2 142.2h1.7v1.7h-1.7zM913.2 142.2h1.7v1.7h-1.7zM925.2 142.2h1.7v1.7h-1.7zM37.2 202.2h1.7v1.7h-1.7zM49.2 202.2h1.7v1.7h-1.7zM73.2 202.2h1.7v1.7h-1.7zM85.2 202.2h1.7v1.7h-1.7zM97.2 202.2h1.7v1.7h-1.7zM109.2 202.2h1.7v1.7h-1.7zM133.2 202.2h1.7v1.7h-1.7zM145.2 202.2h1.7v1.7h-1.7zM157.2 202.2h1.7v1.7h-1.7zM169.2 202.2h1.7v1.7h-1.7zM193.2 202.2h1.7v1.7h-1.7zM205.2 202.2h1.7v1.7h-1.7zM217.2 202.2h1.7v1.7h-1.7zM229.2 202.2h1.7v1.7h-1.7zM253.2 202.2h1.7v1.7h-1.7zM265.2 202.2h1.7v1.7h-1.7zM277.2 202.2h1.7v1.7h-1.7zM289.2 202.2h1.7v1.7h-1.7zM313.2 202.2h1.7v1.7h-1.7zM325.2 202.2h1.7v1.7h-1.7zM337.2 202.2h1.7v1.7h-1.7zM349.2 202.2h1.7v1.7h-1.7zM373.2 202.2h1.7v1.7h-1.7zM385.2 202.2h1.7v1.7h-1.7zM397.2 202.2h1.7v1.7h-1.7zM409.2 202.2h1.7v1.7h-1.7zM433.2 202.2h1.7v1.7h-1.7zM445.2 202.2h1.7v1.7h-1.7zM457.2 202.2h1.7v1.7h-1.7zM469.2 202.2h1.7v1.7h-1.7zM493.2 202.2h1.7v1.7h-1.7zM505.2 202.2h1.7v1.7h-1.7zM517.2 202.2h1.7v1.7h-1.7zM529.2 202.2h1.7v1.7h-1.7zM553.2 202.2h1.7v1.7h-1.7zM565.2 202.2h1.7v1.7h-1.7zM577.2 202.2h1.7v1.7h-1.7zM589.2 202.2h1.7v1.7h-1.7zM613.2 202.2h1.7v1.7h-1.7zM625.2 202.2h1.7v1.7h-1.7zM637.2 202.2h1.7v1.7h-1.7zM649.2 202.2h1.7v1.7h-1.7zM673.2 202.2h1.7v1.7h-1.7zM685.2 202.2h1.7v1.7h-1.7zM697.2 202.2h1.7v1.7h-1.7zM709.2 202.2h1.7v1.7h-1.7zM733.2 202.2h1.7v1.7h-1.7zM745.2 202.2h1.7v1.7h-1.7zM757.2 202.2h1.7v1.7h-1.7zM769.2 202.2h1.7v1.7h-1.7zM793.2 202.2h1.7v1.7h-1.7zM805.2 202.2h1.7v1.7h-1.7zM817.2 202.2h1.7v1.7h-1.7zM829.2 202.2h1.7v1.7h-1.7zM853.2 202.2h1.7v1.7h-1.7zM865.2 202.2h1.7v1.7h-1.7zM877.2 202.2h1.7v1.7h-1.7zM889.2 202.2h1.7v1.7h-1.7zM913.2 202.2h1.7v1.7h-1.7zM925.2 202.2h1.7v1.7h-1.7zM37.2 262.2h1.7v1.7h-1.7zM49.2 262.2h1.7v1.7h-1.7zM73.2 262.2h1.7v1.7h-1.7zM85.2 262.2h1.7v1.7h-1.7zM97.2 262.2h1.7v1.7h-1.7zM109.2 262.2h1.7v1.7h-1.7zM133.2 262.2h1.7v1.7h-1.7zM145.2 262.2h1.7v1.7h-1.7zM157.2 262.2h1.7v1.7h-1.7zM169.2 262.2h1.7v1.7h-1.7zM193.2 262.2h1.7v1.7h-1.7zM205.2 262.2h1.7v1.7h-1.7zM217.2 262.2h1.7v1.7h-1.7zM229.2 262.2h1.7v1.7h-1.7zM253.2 262.2h1.7v1.7h-1.7zM265.2 262.2h1.7v1.7h-1.7zM277.2 262.2h1.7v1.7h-1.7zM289.2 262.2h1.7v1.7h-1.7zM313.2 262.2h1.7v1.7h-1.7zM325.2 262.2h1.7v1.7h-1.7zM337.2 262.2h1.7v1.7h-1.7zM349.2 262.2h1.7v1.7h-1.7zM373.2 262.2h1.7v1.7h-1.7zM385.2 262.2h1.7v1.7h-1.7zM397.2 262.2h1.7v1.7h-1.7zM409.2 262.2h1.7v1.7h-1.7zM433.2 262.2h1.7v1.7h-1.7zM445.2 262.2h1.7v1.7h-1.7zM457.2 262.2h1.7v1.7h-1.7zM469.2 262.2h1.7v1.7h-1.7zM493.2 262.2h1.7v1.7h-1.7zM505.2 262.2h1.7v1.7h-1.7zM517.2 262.2h1.7v1.7h-1.7zM529.2 262.2h1.7v1.7h-1.7zM553.2 262.2h1.7v1.7h-1.7zM565.2 262.2h1.7v1.7h-1.7zM577.2 262.2h1.7v1.7h-1.7zM589.2 262.2h1.7v1.7h-1.7zM613.2 262.2h1.7v1.7h-1.7zM625.2 262.2h1.7v1.7h-1.7zM637.2 262.2h1.7v1.7h-1.7zM649.2 262.2h1.7v1.7h-1.7zM673.2 262.2h1.7v1.7h-1.7zM685.2 262.2h1.7v1.7h-1.7zM697.2 262.2h1.7v1.7h-1.7zM709.2 262.2h1.7v1.7h-1.7zM733.2 262.2h1.7v1.7h-1.7zM745.2 262.2h1.7v1.7h-1.7zM757.2 262.2h1.7v1.7h-1.7zM769.2 262.2h1.7v1.7h-1.7zM793.2 262.2h1.7v1.7h-1.7zM805.2 262.2h1.7v1.7h-1.7zM817.2 262.2h1.7v1.7h-1.7zM829.2 262.2h1.7v1.7h-1.7zM853.2 262.2h1.7v1.7h-1.7zM865.2 262.2h1.7v1.7h-1.7zM877.2 262.2h1.7v1.7h-1.7zM889.2 262.2h1.7v1.7h-1.7zM913.2 262.2h1.7v1.7h-1.7zM925.2 262.2h1.7v1.7h-1.7zM37.2 382.2h1.7v1.7h-1.7zM49.2 382.2h1.7v1.7h-1.7zM73.2 382.2h1.7v1.7h-1.7zM85.2 382.2h1.7v1.7h-1.7zM97.2 382.2h1.7v1.7h-1.7zM109.2 382.2h1.7v1.7h-1.7zM133.2 382.2h1.7v1.7h-1.7zM145.2 382.2h1.7v1.7h-1.7zM157.2 382.2h1.7v1.7h-1.7zM169.2 382.2h1.7v1.7h-1.7zM193.2 382.2h1.7v1.7h-1.7zM205.2 382.2h1.7v1.7h-1.7zM217.2 382.2h1.7v1.7h-1.7zM229.2 382.2h1.7v1.7h-1.7zM253.2 382.2h1.7v1.7h-1.7zM265.2 382.2h1.7v1.7h-1.7zM277.2 382.2h1.7v1.7h-1.7zM289.2 382.2h1.7v1.7h-1.7zM313.2 382.2h1.7v1.7h-1.7zM325.2 382.2h1.7v1.7h-1.7zM337.2 382.2h1.7v1.7h-1.7zM349.2 382.2h1.7v1.7h-1.7zM373.2 382.2h1.7v1.7h-1.7zM385.2 382.2h1.7v1.7h-1.7zM397.2 382.2h1.7v1.7h-1.7zM409.2 382.2h1.7v1.7h-1.7zM433.2 382.2h1.7v1.7h-1.7zM445.2 382.2h1.7v1.7h-1.7zM457.2 382.2h1.7v1.7h-1.7zM469.2 382.2h1.7v1.7h-1.7zM493.2 382.2h1.7v1.7h-1.7zM505.2 382.2h1.7v1.7h-1.7zM517.2 382.2h1.7v1.7h-1.7zM529.2 382.2h1.7v1.7h-1.7zM553.2 382.2h1.7v1.7h-1.7zM565.2 382.2h1.7v1.7h-1.7zM577.2 382.2h1.7v1.7h-1.7zM589.2 382.2h1.7v1.7h-1.7zM613.2 382.2h1.7v1.7h-1.7zM625.2 382.2h1.7v1.7h-1.7zM637.2 382.2h1.7v1.7h-1.7zM649.2 382.2h1.7v1.7h-1.7zM673.2 382.2h1.7v1.7h-1.7zM685.2 382.2h1.7v1.7h-1.7zM697.2 382.2h1.7v1.7h-1.7zM709.2 382.2h1.7v1.7h-1.7zM733.2 382.2h1.7v1.7h-1.7zM745.2 382.2h1.7v1.7h-1.7zM757.2 382.2h1.7v1.7h-1.7zM769.2 382.2h1.7v1.7h-1.7zM793.2 382.2h1.7v1.7h-1.7zM805.2 382.2h1.7v1.7h-1.7zM817.2 382.2h1.7v1.7h-1.7zM829.2 382.2h1.7v1.7h-1.7zM853.2 382.2h1.7v1.7h-1.7zM865.2 382.2h1.7v1.7h-1.7zM877.2 382.2h1.7v1.7h-1.7zM889.2 382.2h1.7v1.7h-1.7zM913.2 382.2h1.7v1.7h-1.7zM925.2 382.2h1.7v1.7h-1.7zM37.2 442.2h1.7v1.7h-1.7zM49.2 442.2h1.7v1.7h-1.7zM73.2 442.2h1.7v1.7h-1.7zM85.2 442.2h1.7v1.7h-1.7zM97.2 442.2h1.7v1.7h-1.7zM109.2 442.2h1.7v1.7h-1.7zM133.2 442.2h1.7v1.7h-1.7zM145.2 442.2h1.7v1.7h-1.7zM157.2 442.2h1.7v1.7h-1.7zM169.2 442.2h1.7v1.7h-1.7zM193.2 442.2h1.7v1.7h-1.7zM205.2 442.2h1.7v1.7h-1.7zM217.2 442.2h1.7v1.7h-1.7zM229.2 442.2h1.7v1.7h-1.7zM253.2 442.2h1.7v1.7h-1.7zM265.2 442.2h1.7v1.7h-1.7zM277.2 442.2h1.7v1.7h-1.7zM289.2 442.2h1.7v1.7h-1.7zM313.2 442.2h1.7v1.7h-1.7zM325.2 442.2h1.7v1.7h-1.7zM337.2 442.2h1.7v1.7h-1.7zM349.2 442.2h1.7v1.7h-1.7zM373.2 442.2h1.7v1.7h-1.7zM385.2 442.2h1.7v1.7h-1.7zM397.2 442.2h1.7v1.7h-1.7zM409.2 442.2h1.7v1.7h-1.7zM433.2 442.2h1.7v1.7h-1.7zM445.2 442.2h1.7v1.7h-1.7zM457.2 442.2h1.7v1.7h-1.7zM469.2 442.2h1.7v1.7h-1.7zM493.2 442.2h1.7v1.7h-1.7zM505.2 442.2h1.7v1.7h-1.7zM517.2 442.2h1.7v1.7h-1.7zM529.2 442.2h1.7v1.7h-1.7zM553.2 442.2h1.7v1.7h-1.7zM565.2 442.2h1.7v1.7h-1.7zM577.2 442.2h1.7v1.7h-1.7zM589.2 442.2h1.7v1.7h-1.7zM613.2 442.2h1.7v1.7h-1.7zM625.2 442.2h1.7v1.7h-1.7zM637.2 442.2h1.7v1.7h-1.7zM649.2 442.2h1.7v1.7h-1.7zM673.2 442.2h1.7v1.7h-1.7zM685.2 442.2h1.7v1.7h-1.7zM697.2 442.2h1.7v1.7h-1.7zM709.2 442.2h1.7v1.7h-1.7zM733.2 442.2h1.7v1.7h-1.7zM745.2 442.2h1.7v1.7h-1.7zM757.2 442.2h1.7v1.7h-1.7zM769.2 442.2h1.7v1.7h-1.7zM793.2 442.2h1.7v1.7h-1.7zM805.2 442.2h1.7v1.7h-1.7zM817.2 442.2h1.7v1.7h-1.7zM829.2 442.2h1.7v1.7h-1.7zM853.2 442.2h1.7v1.7h-1.7zM865.2 442.2h1.7v1.7h-1.7zM877.2 442.2h1.7v1.7h-1.7zM889.2 442.2h1.7v1.7h-1.7zM913.2 442.2h1.7v1.7h-1.7zM925.2 442.2h1.7v1.7h-1.7zM37.2 502.2h1.7v1.7h-1.7zM49.2 502.2h1.7v1.7h-1.7zM73.2 502.2h1.7v1.7h-1.7zM85.2 502.2h1.7v1.7h-1.7zM97.2 502.2h1.7v1.7h-1.7zM109.2 502.2h1.7v1.7h-1.7zM133.2 502.2h1.7v1.7h-1.7zM145.2 502.2h1.7v1.7h-1.7zM157.2 502.2h1.7v1.7h-1.7zM169.2 502.2h1.7v1.7h-1.7zM193.2 502.2h1.7v1.7h-1.7zM205.2 502.2h1.7v1.7h-1.7zM217.2 502.2h1.7v1.7h-1.7zM229.2 502.2h1.7v1.7h-1.7zM253.2 502.2h1.7v1.7h-1.7zM265.2 502.2h1.7v1.7h-1.7zM277.2 502.2h1.7v1.7h-1.7zM289.2 502.2h1.7v1.7h-1.7zM313.2 502.2h1.7v1.7h-1.7zM325.2 502.2h1.7v1.7h-1.7zM337.2 502.2h1.7v1.7h-1.7zM349.2 502.2h1.7v1.7h-1.7zM373.2 502.2h1.7v1.7h-1.7zM385.2 502.2h1.7v1.7h-1.7zM397.2 502.2h1.7v1.7h-1.7zM409.2 502.2h1.7v1.7h-1.7zM433.2 502.2h1.7v1.7h-1.7zM445.2 502.2h1.7v1.7h-1.7zM457.2 502.2h1.7v1.7h-1.7zM469.2 502.2h1.7v1.7h-1.7zM493.2 502.2h1.7v1.7h-1.7zM505.2 502.2h1.7v1.7h-1.7zM517.2 502.2h1.7v1.7h-1.7zM529.2 502.2h1.7v1.7h-1.7zM553.2 502.2h1.7v1.7h-1.7zM565.2 502.2h1.7v1.7h-1.7zM577.2 502.2h1.7v1.7h-1.7zM589.2 502.2h1.7v1.7h-1.7zM613.2 502.2h1.7v1.7h-1.7zM625.2 502.2h1.7v1.7h-1.7zM637.2 502.2h1.7v1.7h-1.7zM649.2 502.2h1.7v1.7h-1.7zM673.2 502.2h1.7v1.7h-1.7zM685.2 502.2h1.7v1.7h-1.7zM697.2 502.2h1.7v1.7h-1.7zM709.2 502.2h1.7v1.7h-1.7zM733.2 502.2h1.7v1.7h-1.7zM745.2 502.2h1.7v1.7h-1.7zM757.2 502.2h1.7v1.7h-1.7zM769.2 502.2h1.7v1.7h-1.7zM793.2 502.2h1.7v1.7h-1.7zM805.2 502.2h1.7v1.7h-1.7zM817.2 502.2h1.7v1.7h-1.7zM829.2 502.2h1.7v1.7h-1.7zM853.2 502.2h1.7v1.7h-1.7zM865.2 502.2h1.7v1.7h-1.7zM877.2 502.2h1.7v1.7h-1.7zM889.2 502.2h1.7v1.7h-1.7zM913.2 502.2h1.7v1.7h-1.7zM925.2 502.2h1.7v1.7h-1.7zM37.2 562.2h1.7v1.7h-1.7zM49.2 562.2h1.7v1.7h-1.7zM73.2 562.2h1.7v1.7h-1.7zM85.2 562.2h1.7v1.7h-1.7zM97.2 562.2h1.7v1.7h-1.7zM109.2 562.2h1.7v1.7h-1.7zM133.2 562.2h1.7v1.7h-1.7zM145.2 562.2h1.7v1.7h-1.7zM157.2 562.2h1.7v1.7h-1.7zM169.2 562.2h1.7v1.7h-1.7zM193.2 562.2h1.7v1.7h-1.7zM205.2 562.2h1.7v1.7h-1.7zM217.2 562.2h1.7v1.7h-1.7zM229.2 562.2h1.7v1.7h-1.7zM253.2 562.2h1.7v1.7h-1.7zM265.2 562.2h1.7v1.7h-1.7zM277.2 562.2h1.7v1.7h-1.7zM289.2 562.2h1.7v1.7h-1.7zM313.2 562.2h1.7v1.7h-1.7zM325.2 562.2h1.7v1.7h-1.7zM337.2 562.2h1.7v1.7h-1.7zM349.2 562.2h1.7v1.7h-1.7zM373.2 562.2h1.7v1.7h-1.7zM385.2 562.2h1.7v1.7h-1.7zM397.2 562.2h1.7v1.7h-1.7zM409.2 562.2h1.7v1.7h-1.7zM433.2 562.2h1.7v1.7h-1.7zM445.2 562.2h1.7v1.7h-1.7zM457.2 562.2h1.7v1.7h-1.7zM469.2 562.2h1.7v1.7h-1.7zM493.2 562.2h1.7v1.7h-1.7zM505.2 562.2h1.7v1.7h-1.7zM517.2 562.2h1.7v1.7h-1.7zM529.2 562.2h1.7v1.7h-1.7zM553.2 562.2h1.7v1.7h-1.7zM565.2 562.2h1.7v1.7h-1.7zM577.2 562.2h1.7v1.7h-1.7zM589.2 562.2h1.7v1.7h-1.7zM613.2 562.2h1.7v1.7h-1.7zM625.2 562.2h1.7v1.7h-1.7zM637.2 562.2h1.7v1.7h-1.7zM649.2 562.2h1.7v1.7h-1.7zM673.2 562.2h1.7v1.7h-1.7zM685.2 562.2h1.7v1.7h-1.7zM697.2 562.2h1.7v1.7h-1.7zM709.2 562.2h1.7v1.7h-1.7zM733.2 562.2h1.7v1.7h-1.7zM745.2 562.2h1.7v1.7h-1.7zM757.2 562.2h1.7v1.7h-1.7zM769.2 562.2h1.7v1.7h-1.7zM793.2 562.2h1.7v1.7h-1.7zM805.2 562.2h1.7v1.7h-1.7zM817.2 562.2h1.7v1.7h-1.7zM829.2 562.2h1.7v1.7h-1.7zM853.2 562.2h1.7v1.7h-1.7zM865.2 562.2h1.7v1.7h-1.7zM877.2 562.2h1.7v1.7h-1.7zM889.2 562.2h1.7v1.7h-1.7zM913.2 562.2h1.7v1.7h-1.7zM925.2 562.2h1.7v1.7h-1.7z"/>
<path fill="#d8d8d8" d="M480 34h4v2h-4zM480 46h4v2h-4zM480 58h4v2h-4zM480 70h4v2h-4zM480 82h4v2h-4zM480 94h4v2h-4zM480 106h4v2h-4zM480 118h4v2h-4zM480 130h4v2h-4zM480 142h4v2h-4zM480 154h4v2h-4zM480 166h4v2h-4zM480 178h4v2h-4zM480 190h4v2h-4zM480 202h4v2h-4zM480 214h4v2h-4zM480 226h4v2h-4zM480 238h4v2h-4zM480 250h4v2h-4zM480 262h4v2h-4zM480 274h4v2h-4zM480 286h4v2h-4zM480 298h4v2h-4zM480 310h4v2h-4zM480 322h4v2h-4zM480 334h4v2h-4zM480 346h4v2h-4zM480 358h4v2h-4zM480 370h4v2h-4zM480 382h4v2h-4zM480 394h4v2h-4zM480 406h4v2h-4zM480 418h4v2h-4zM480 430h4v2h-4zM480 442h4v2h-4zM480 454h4v2h-4zM480 466h4v2h-4zM480 478h4v2h-4zM480 490h4v2h-4zM480 502h4v2h-4zM480 514h4v2h-4zM480 526h4v2h-4zM480 538h4v2h-4zM480 550h4v2h-4zM480 562h4v2h-4zM480 574h4v2h-4zM480 586h4v2h-4zM480 598h4v2h-4zM480 610h4v2h-4zM157 321h2v4h-2zM169 321h2v4h-2zM181 321h2v4h-2zM193 321h2v4h-2zM205 321h2v4h-2zM361 321h2v4h-2zM373 321h2v4h-2zM385 321h2v4h-2zM397 321h2v4h-2zM409 321h2v4h-2zM421 321h2v4h-2zM433 321h2v4h-2zM445 321h2v4h-2zM457 321h2v4h-2zM469 321h2v4h-2zM481 321h2v4h-2zM493 321h2v4h-2zM505 321h2v4h-2zM517 321h2v4h-2zM529 321h2v4h-2zM541 321h2v4h-2zM553 321h2v4h-2zM565 321h2v4h-2zM577 321h2v4h-2zM589 321h2v4h-2zM601 321h2v4h-2zM613 321h2v4h-2zM625 321h2v4h-2zM637 321h2v4h-2zM649 321h2v4h-2zM661 321h2v4h-2zM673 321h2v4h-2zM685 321h2v4h-2zM697 321h2v4h-2zM709 321h2v4h-2zM721 321h2v4h-2zM733 321h2v4h-2z"/>
<path fill="#e0e0e0" d="M175 322h14v2h-14zM181 317h2v13h-2zM781 316h2v14h-2z"/>
<path d="M148.5 324.5 L149 350 L151 351 L157 381 L186 399 L187 407 L190.5 383 L197.5 382.5 L199 380 L208.5 324.5M353.5 324.5 L355 360 L361.5 394 L372 340 L380 338 L384.5 333.5 L393.5 335.5 L402 374 L407 379 L409 383 L416.5 341 L421 338 L431 341 L438 343.5 L448.5 391 L459 340.5 L471.5 340 L479 373 L481.5 382 L490.5 343 L493.5 340.5 L503 341 L504.5 345.5 L513.5 379 L521.5 350 L528 350 L532 345.5 L535.5 342 L539 346.5 L544.5 354 L552.5 371.5 L558 367 L562 354.5 L568.5 350 L573 346.5 L579.5 343 L583.5 354.5 L587 358.5 L597 371 L603 361 L610 354 L624.5 353.5 L630.5 367 L637.5 368 L642 354.5" fill="none" stroke="#f0f000" stroke-width="2.8" stroke-linejoin="round"/>
<path d="M642 354.5 L645.5 349.5 L650 347.5 L656 340 L662.5 336 L670 333 L683 332.5 L690 336 L700 340 L705 343 L720 345 L730 344 L740 341 L745 338 L748 336 L748 324.5" fill="none" stroke="#f0f000" stroke-width="3.8" stroke-linejoin="round"/>
<path d="M741 336L748 333.5V342H741Z" fill="#f0f000"/>
<path d="M26 324.5H149M208 324.5H354M747.5 324.5H934" fill="none" stroke="#f0f000" stroke-width="3.6"/>
<path d="M33 325h1.5v2.5h-1.5zM39 325h1.5v2.5h-1.5zM42 325h1.5v2.5h-1.5zM45 321h1.2v3h-1.2zM48 325h1.5v2.5h-1.5zM52 321h1.2v3h-1.2zM58 321h1.2v3h-1.2zM62 321h1.2v3h-1.2zM68 321h1.2v3h-1.2zM75 321h1.2v3h-1.2zM79 325h1.5v2.5h-1.5zM86 325h1.5v2.5h-1.5zM93 325h1.5v2.5h-1.5zM96 325h1.5v2.5h-1.5zM99 325h1.5v2.5h-1.5zM103 321h1.2v3h-1.2zM107 325h1.5v2.5h-1.5zM114 321h1.2v3h-1.2zM122 321h1.2v3h-1.2zM129 325h1.5v2.5h-1.5zM133 321h1.2v3h-1.2zM140 325h1.5v2.5h-1.5zM147 321h1.2v3h-1.2zM216 325h1.5v2.5h-1.5zM222 325h1.5v2.5h-1.5zM228 325h1.5v2.5h-1.5zM234 321h1.2v3h-1.2zM238 325h1.5v2.5h-1.5zM246 325h1.5v2.5h-1.5zM249 325h1.5v2.5h-1.5zM256 321h1.2v3h-1.2zM261 325h1.5v2.5h-1.5zM266 325h1.5v2.5h-1.5zM269 321h1.2v3h-1.2zM275 321h1.2v3h-1.2zM280 321h1.2v3h-1.2zM286 321h1.2v3h-1.2zM294 321h1.2v3h-1.2zM301 325h1.5v2.5h-1.5zM306 321h1.2v3h-1.2zM311 325h1.5v2.5h-1.5zM318 325h1.5v2.5h-1.5zM321 325h1.5v2.5h-1.5zM326 321h1.2v3h-1.2zM334 321h1.2v3h-1.2zM342 325h1.5v2.5h-1.5zM350 325h1.5v2.5h-1.5zM756 321h1.2v3h-1.2zM762 325h1.5v2.5h-1.5zM767 321h1.2v3h-1.2zM773 321h1.2v3h-1.2zM780 321h1.2v3h-1.2zM783 321h1.2v3h-1.2zM788 321h1.2v3h-1.2zM792 321h1.2v3h-1.2zM798 321h1.2v3h-1.2zM804 321h1.2v3h-1.2zM809 325h1.5v2.5h-1.5zM815 325h1.5v2.5h-1.5zM820 325h1.5v2.5h-1.5zM825 325h1.5v2.5h-1.5zM831 325h1.5v2.5h-1.5zM835 321h1.2v3h-1.2zM839 321h1.2v3h-1.2zM843 321h1.2v3h-1.2zM850 321h1.2v3h-1.2zM855 321h1.2v3h-1.2zM861 325h1.5v2.5h-1.5zM868 325h1.5v2.5h-1.5zM872 325h1.5v2.5h-1.5zM879 325h1.5v2.5h-1.5zM887 325h1.5v2.5h-1.5zM890 321h1.2v3h-1.2zM898 325h1.5v2.5h-1.5zM904 321h1.2v3h-1.2zM910 321h1.2v3h-1.2zM918 321h1.2v3h-1.2zM922 321h1.2v3h-1.2zM926 321h1.2v3h-1.2zM929 321h1.2v3h-1.2z" fill="#e8e810"/>
<path d="M155.5 378L157.5 375L159 377.5L161.5 377.5L163 375.5L164.5 378L167 378.5L169 380.5L172 382L174.5 383.5L177 385.5L180 387.5L183 389.5L185.5 391.5L187.5 393L187.5 402L185 402.5L182.5 400L179 397.5L175.5 395.5L172 392.5L169 390.5L166 388L163 389L160.5 389.5L158 387.5L155.5 386.5Z" fill="#f0f000"/>
<path d="M27 325V352M39 325V352M51 325V352M63.3 325V352M75.4 325V352M87.8 325V353.5M99.8 325V352M111.8 325V352M123.8 325V353.5M135.8 325V352M209.5 325V363M233.5 325V361M245.5 325V363M257.5 325V361M269.5 325V361M293.5 325V365M305.5 325V362.5M317.5 325V360.5M330.5 325V363M838 325V356M850 325V356M875 325V356M887.2 325V356M899.2 325V356M911 325V354M923 325V356" fill="none" stroke="#e0e010" stroke-width="1.6"/>
<path d="M862.8 325V354" fill="none" stroke="#f0f000" stroke-width="2.2"/>
<path d="M221.5 325V360H226.5V325M281.5 325V360H287.5V325M343 325V360H347.5V325" fill="none" stroke="#e8e800" stroke-width="2"/>
<path d="M-2 313.5H17L23.5 323.7L17 334H-2Z" fill="#000" stroke="#d8e030" stroke-width="1.8"/>
<text x="3.5" y="330.5" font-size="18" fill="#e0e020">2</text>
<text y="19" font-size="19" fill="#001040" stroke="#001040" class="bd"><tspan x="29">A</tspan><tspan x="41">K</tspan><tspan x="53">T</tspan><tspan x="65">A</tspan><tspan x="77">K</tspan><tspan x="89">O</tspan><tspan x="101">M</tspan></text>
<rect x="144.5" y="1" width="96" height="22" rx="11" fill="#f00000"/>
<text y="18" font-size="19" fill="#400000" stroke="#400000" class="bd"><tspan x="167">S</tspan><tspan x="179">t</tspan><tspan x="191">o</tspan><tspan x="203">p</tspan></text>
<rect x="299.5" y="1" width="361" height="22" rx="11" fill="#000"/>
<rect x="312" y="10.5" width="337" height="1.5" fill="#c8c820"/>
<path d="M356 3h-2v19h2" fill="none" stroke="#c8c8c8" stroke-width="1.5"/>
<path d="M604 3h1.5v19h-1.5" fill="none" stroke="#c8c8c8" stroke-width="1.5"/>
<path d="M435.5 2.5h7v2h-2.5v3h-2v-3h-2.5z" fill="#e020e0"/>
<rect x="672.5" y="1" width="129" height="22" rx="11" fill="#000"/>
<path d="M677 5.5q0-1.5 1.5-1.5h12q1.5 0 1.5 1.5v11.5l-4 4h-7l-4-4z" fill="none" stroke="#8a2ad8" stroke-width="1.6"/>
<path d="M679.5 8h10v2h-4v7h-2v-7h-4z" fill="#b844e0"/>
<text y="19" font-size="19" fill="#e8e8e8" class="er"><tspan x="695">2</tspan><tspan x="707">.</tspan><tspan x="719">4</tspan><tspan x="732.2" font-family="Liberation Sans" font-size="17.5">0</tspan><tspan x="744.2" font-family="Liberation Sans" font-size="17.5">0</tspan><tspan x="755">s</tspan></text>
<rect x="821" y="1" width="68" height="22" rx="11" fill="#000"/>
<text y="18" font-size="19" fill="#e8e8e8" class="er"><tspan x="832.2" font-family="Liberation Sans" font-size="17.5">0</tspan><tspan x="843">:</tspan><tspan x="855">5</tspan><tspan x="867">4</tspan></text>
<path d="M908.5 15.5L917 9.5L921.5 15.5L913 20.5Z" fill="#c8a0c0" stroke="#2050b8" stroke-width="1.6"/>
<path d="M912 15.5L916.5 12.5L918.5 15L914 18Z" fill="#304a90"/>
<path d="M907 6.5Q909 3 913 3.5Q916 4 915.5 7.5L912 11L911 14L909.5 13.5Q906.5 10 907 6.5Z" fill="#38b838"/>
<rect x="0" y="623" width="1.8" height="97" fill="#6cbcc4"/>
<rect x="0" y="716.5" width="383" height="3.5" fill="#6cbcc4"/>
<rect x="0" y="670.8" width="383" height="2.4" fill="#6cbcc4"/>
<rect x="250.5" y="623" width="3" height="50" fill="#6cbcc4"/>
<rect x="380" y="623" width="3.2" height="97" fill="#6cbcc4"/>
<rect x="0" y="646.6" width="251" height="1.4" fill="#3a5a70"/>
<rect x="1.8" y="623.6" width="248.5" height="23" rx="4" fill="#000"/>
<rect x="1.8" y="648" width="248.5" height="22.8" rx="4" fill="#000"/>
<rect x="253.6" y="623.6" width="126.2" height="46.9" rx="5" fill="#000"/>
<rect x="1.4" y="673.5" width="378.6" height="43" rx="5" fill="#000"/>
<circle cx="12" cy="636" r="9.6" fill="#f00000"/>
<text x="6.5" y="642.5" font-size="18" fill="#200000" stroke="#200000" stroke-width="0.5">1</text>
<circle cx="12.5" cy="659.8" r="9.7" fill="#e8e800"/>
<text x="7.0" y="666.0999999999999" font-size="18" fill="#000" stroke="#000" stroke-width="0.5">2</text>
<circle cx="11.5" cy="684.5" r="9.7" fill="#e8e800"/>
<text x="6.0" y="690.8" font-size="18" fill="#000" stroke="#000" stroke-width="0.5">2</text>
<circle cx="11.5" cy="707" r="9.7" fill="#e8e800"/>
<text x="6.0" y="713.3" font-size="18" fill="#000" stroke="#000" stroke-width="0.5">2</text>
<circle cx="202" cy="684.7" r="9.7" fill="#e8e800"/>
<text x="196.5" y="691.0" font-size="18" fill="#000" stroke="#000" stroke-width="0.5">2</text>
<circle cx="202" cy="707.5" r="9.7" fill="#e8e800"/>
<text x="196.5" y="713.8" font-size="18" fill="#000" stroke="#000" stroke-width="0.5">2</text>
<text y="643.5" font-size="19" fill="#c80000" class="er"><tspan x="21">5</tspan><tspan x="33">V</tspan><tspan x="45">-</tspan></text>
<text y="643.5" font-size="19" fill="#c80000" class="er"><tspan x="128.2" font-family="Liberation Sans" font-size="17.5">0</tspan><tspan x="139">.</tspan><tspan x="152.2" font-family="Liberation Sans" font-size="17.5">0</tspan><tspan x="164.2" font-family="Liberation Sans" font-size="17.5">0</tspan><tspan x="175">d</tspan><tspan x="187">i</tspan><tspan x="199">v</tspan></text>
<text y="667" font-size="19" fill="#c8c820" class="er"><tspan x="21">2</tspan><tspan x="33">V</tspan><tspan x="45">-</tspan></text>
<text y="667" font-size="19" fill="#c8c820" class="er"><tspan x="128.2" font-family="Liberation Sans" font-size="17.5">0</tspan><tspan x="139">.</tspan><tspan x="152.2" font-family="Liberation Sans" font-size="17.5">0</tspan><tspan x="164.2" font-family="Liberation Sans" font-size="17.5">0</tspan><tspan x="175">d</tspan><tspan x="187">i</tspan><tspan x="199">v</tspan></text>
<text y="641.5" font-size="19" fill="#e0e0e0" class="er"><tspan x="270">(</tspan><tspan x="282">5</tspan><tspan x="295.2" font-family="Liberation Sans" font-size="17.5">0</tspan><tspan x="307.2" font-family="Liberation Sans" font-size="17.5">0</tspan><tspan x="318">S</tspan><tspan x="330">/</tspan><tspan x="342">s</tspan><tspan x="354">)</tspan></text>
<text y="665.5" font-size="19" fill="#e0e0e0" class="er"><tspan x="262">D</tspan><tspan x="274">e</tspan><tspan x="286">p</tspan><tspan x="298">t</tspan><tspan x="310">h</tspan><tspan x="322">:</tspan><tspan x="334">1</tspan><tspan x="347.2" font-family="Liberation Sans" font-size="17.5">0</tspan><tspan x="358">K</tspan></text>
<text y="690" font-size="19" fill="#dcdc38" class="er"><tspan x="25">F</tspan><tspan x="37">:</tspan><tspan x="73">?</tspan></text>
<text y="713" font-size="19" fill="#dcdc38" class="er"><tspan x="25">+</tspan><tspan x="37">D</tspan><tspan x="49">:</tspan><tspan x="61">2</tspan><tspan x="73">7</tspan><tspan x="85">.</tspan><tspan x="97">6</tspan><tspan x="109">%</tspan></text>
<text y="690" font-size="19" fill="#dcdc38" class="er"><tspan x="216">V</tspan><tspan x="228">k</tspan><tspan x="240">:</tspan><tspan x="252">8</tspan><tspan x="264">5</tspan><tspan x="276">9</tspan><tspan x="288">.</tspan><tspan x="300">5</tspan><tspan x="312">m</tspan><tspan x="324">v</tspan></text>
<text y="712.5" font-size="19" fill="#dcdc38" class="er"><tspan x="216">V</tspan><tspan x="228">:</tspan><tspan x="240">-</tspan><tspan x="252">5</tspan><tspan x="264">5</tspan><tspan x="276">4</tspan><tspan x="288">.</tspan><tspan x="300">4</tspan><tspan x="312">m</tspan><tspan x="324">v</tspan></text>
<rect x="383" y="645" width="575" height="71" fill="#0260a0"/>
<rect x="383.5" y="623.5" width="118.5" height="21.5" rx="10.5" fill="#000"/>
<text y="640.5" font-size="19" fill="#e0e0e0" class="er"><tspan x="404">M</tspan><tspan x="416">:</tspan><tspan x="428">1</tspan><tspan x="440">.</tspan><tspan x="453.2" font-family="Liberation Sans" font-size="17.5">0</tspan><tspan x="464">s</tspan></text>
<rect x="798.5" y="623.5" width="154" height="21.5" rx="10.5" fill="#000"/>
<circle cx="809.5" cy="634" r="9" fill="#e8e800"/>
<text x="804.5" y="640" font-size="17" fill="#000" stroke="#000" stroke-width="0.4">2</text>
<path d="M822 643.5h8.5l5-16.5h9" fill="none" stroke="#e0e0e0" stroke-width="1.6"/>
<text y="641.5" font-size="19" fill="#e0e0e0" class="er"><tspan x="849">1</tspan><tspan x="861">.</tspan><tspan x="874.2" font-family="Liberation Sans" font-size="17.5">0</tspan><tspan x="885">8</tspan><tspan x="897">v</tspan></text>
<rect x="387" y="649" width="108" height="67" rx="4" fill="#002a80"/>
<rect x="387" y="649" width="106" height="65" rx="4" fill="#58aaf8"/>
<rect x="389" y="651" width="104" height="62.5" rx="2" fill="#0480e0"/>
<rect x="717" y="649" width="107" height="67" rx="4" fill="#002a80"/>
<rect x="717" y="649" width="105" height="65" rx="4" fill="#58aaf8"/>
<rect x="719" y="651" width="103" height="62.5" rx="2" fill="#0480e0"/>
<text y="675" font-size="19" fill="#002070" stroke="#002070" class="bd"><tspan x="414">T</tspan><tspan x="426">y</tspan><tspan x="438">p</tspan><tspan x="450">e</tspan></text>
<rect x="409" y="685" width="60.5" height="23.5" fill="#e8e8e8"/>
<text y="703" font-size="19" fill="#000"><tspan x="410">I</tspan><tspan x="422">m</tspan><tspan x="434">a</tspan><tspan x="446">g</tspan><tspan x="458">e</tspan></text>
<text y="689.5" font-size="19" fill="#002070"><tspan x="744">S</tspan><tspan x="756">a</tspan><tspan x="768">v</tspan><tspan x="780">e</tspan></text>
</svg></body></html>
